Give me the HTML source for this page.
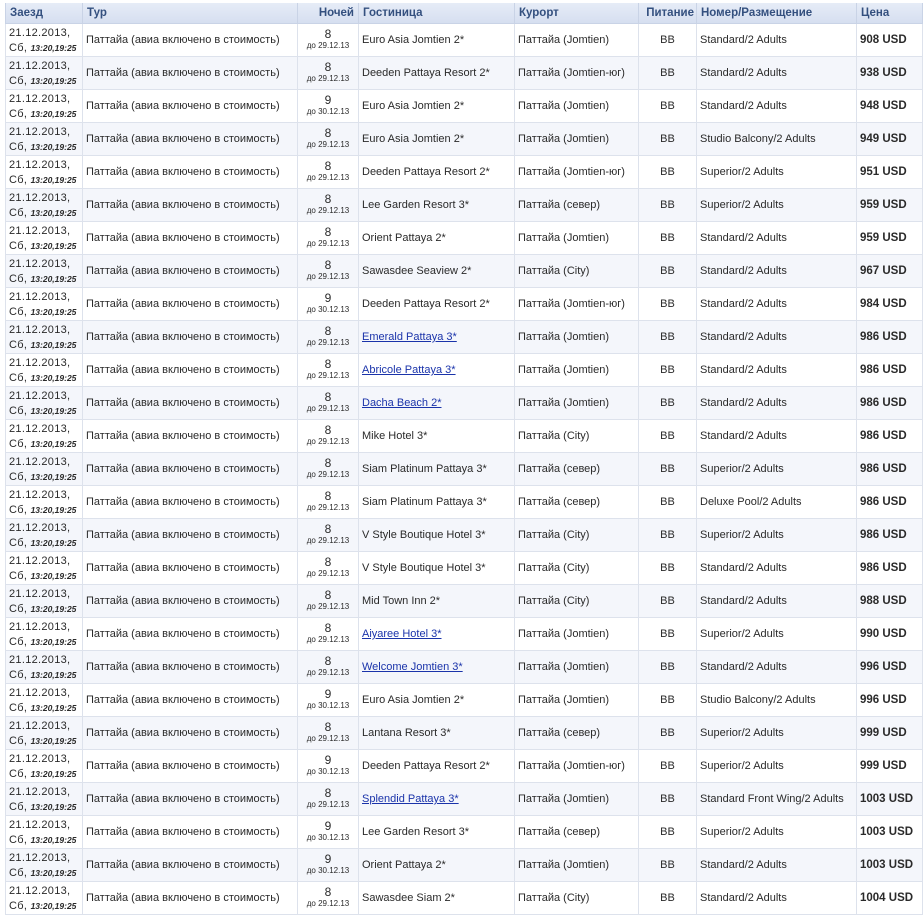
<!DOCTYPE html>
<html><head><meta charset="utf-8">
<style>
html,body{margin:0;padding:0;background:#fff;width:923px;height:911px;overflow:hidden}
table{position:absolute;left:5px;top:3px;border-collapse:collapse;table-layout:fixed;width:917px;font-family:"Liberation Sans",sans-serif;font-size:11px;color:#2a2a2a}
th{height:20px;padding:0 4px;text-align:left;font-size:11.5px;font-weight:bold;color:#34507f;background:linear-gradient(#e6ecf7,#d6dff0);border:1px solid #c9d3e6;border-top:none}
td{height:32px;padding:0 3px;border:1px solid #dde2ec;vertical-align:middle;white-space:nowrap;overflow:hidden}
tr:nth-child(even) td{background:#f4f6fb}
.d{line-height:15px;font-size:11px;letter-spacing:.3px;padding-top:2px;height:30px}
.d i{font-size:8.5px;font-weight:bold;letter-spacing:0}
.n{text-align:center;line-height:11px;font-size:12px}
.n small{font-size:8px;display:block}
.c{text-align:center}
.p{font-weight:bold;font-size:11.5px}
a{color:#1a33aa;text-decoration:underline}
</style></head><body>
<table>
<colgroup><col style="width:77px"><col style="width:215px"><col style="width:61px"><col style="width:156px"><col style="width:124px"><col style="width:58px"><col style="width:160px"><col style="width:66px"></colgroup>
<tr><th>Заезд</th><th>Тур</th><th style="text-align:right">Ночей</th><th>Гостиница</th><th>Курорт</th><th style="text-align:right;padding:0 2px">Питание</th><th>Номер/Размещение</th><th>Цена</th></tr>
<tbody id="b"></tbody>
</table>
<script>
var r=[
[8,"Euro Asia Jomtien 2*","Паттайа (Jomtien)","Standard/2 Adults","908 USD"],
[8,"Deeden Pattaya Resort 2*","Паттайа (Jomtien-юг)","Standard/2 Adults","938 USD"],
[9,"Euro Asia Jomtien 2*","Паттайа (Jomtien)","Standard/2 Adults","948 USD"],
[8,"Euro Asia Jomtien 2*","Паттайа (Jomtien)","Studio Balcony/2 Adults","949 USD"],
[8,"Deeden Pattaya Resort 2*","Паттайа (Jomtien-юг)","Superior/2 Adults","951 USD"],
[8,"Lee Garden Resort 3*","Паттайа (север)","Superior/2 Adults","959 USD"],
[8,"Orient Pattaya 2*","Паттайа (Jomtien)","Standard/2 Adults","959 USD"],
[8,"Sawasdee Seaview 2*","Паттайа (City)","Standard/2 Adults","967 USD"],
[9,"Deeden Pattaya Resort 2*","Паттайа (Jomtien-юг)","Standard/2 Adults","984 USD"],
[8,"#Emerald Pattaya 3*","Паттайа (Jomtien)","Standard/2 Adults","986 USD"],
[8,"#Abricole Pattaya 3*","Паттайа (Jomtien)","Standard/2 Adults","986 USD"],
[8,"#Dacha Beach 2*","Паттайа (Jomtien)","Standard/2 Adults","986 USD"],
[8,"Mike Hotel 3*","Паттайа (City)","Standard/2 Adults","986 USD"],
[8,"Siam Platinum Pattaya 3*","Паттайа (север)","Superior/2 Adults","986 USD"],
[8,"Siam Platinum Pattaya 3*","Паттайа (север)","Deluxe Pool/2 Adults","986 USD"],
[8,"V Style Boutique Hotel 3*","Паттайа (City)","Superior/2 Adults","986 USD"],
[8,"V Style Boutique Hotel 3*","Паттайа (City)","Standard/2 Adults","986 USD"],
[8,"Mid Town Inn 2*","Паттайа (City)","Standard/2 Adults","988 USD"],
[8,"#Aiyaree Hotel 3*","Паттайа (Jomtien)","Superior/2 Adults","990 USD"],
[8,"#Welcome Jomtien 3*","Паттайа (Jomtien)","Standard/2 Adults","996 USD"],
[9,"Euro Asia Jomtien 2*","Паттайа (Jomtien)","Studio Balcony/2 Adults","996 USD"],
[8,"Lantana Resort 3*","Паттайа (север)","Superior/2 Adults","999 USD"],
[9,"Deeden Pattaya Resort 2*","Паттайа (Jomtien-юг)","Superior/2 Adults","999 USD"],
[8,"#Splendid Pattaya 3*","Паттайа (Jomtien)","Standard Front Wing/2 Adults","1003 USD"],
[9,"Lee Garden Resort 3*","Паттайа (север)","Superior/2 Adults","1003 USD"],
[9,"Orient Pattaya 2*","Паттайа (Jomtien)","Standard/2 Adults","1003 USD"],
[8,"Sawasdee Siam 2*","Паттайа (City)","Standard/2 Adults","1004 USD"]];
var h="";
r.forEach(function(x){
var hot=x[1][0]=="#"?'<a>'+x[1].slice(1)+'</a>':x[1];
h+='<tr><td class="d">21.12.2013,<br>Сб, <i>13:20,19:25</i></td><td>Паттайа (авиа включено в стоимость)</td><td class="n">'+x[0]+'<small>до '+(x[0]==8?'29':'30')+'.12.13</small></td><td>'+hot+'</td><td>'+x[2]+'</td><td class="c">BB</td><td>'+x[3]+'</td><td class="p">'+x[4]+'</td></tr>';
});
document.getElementById("b").innerHTML=h;
</script>
</body></html>
